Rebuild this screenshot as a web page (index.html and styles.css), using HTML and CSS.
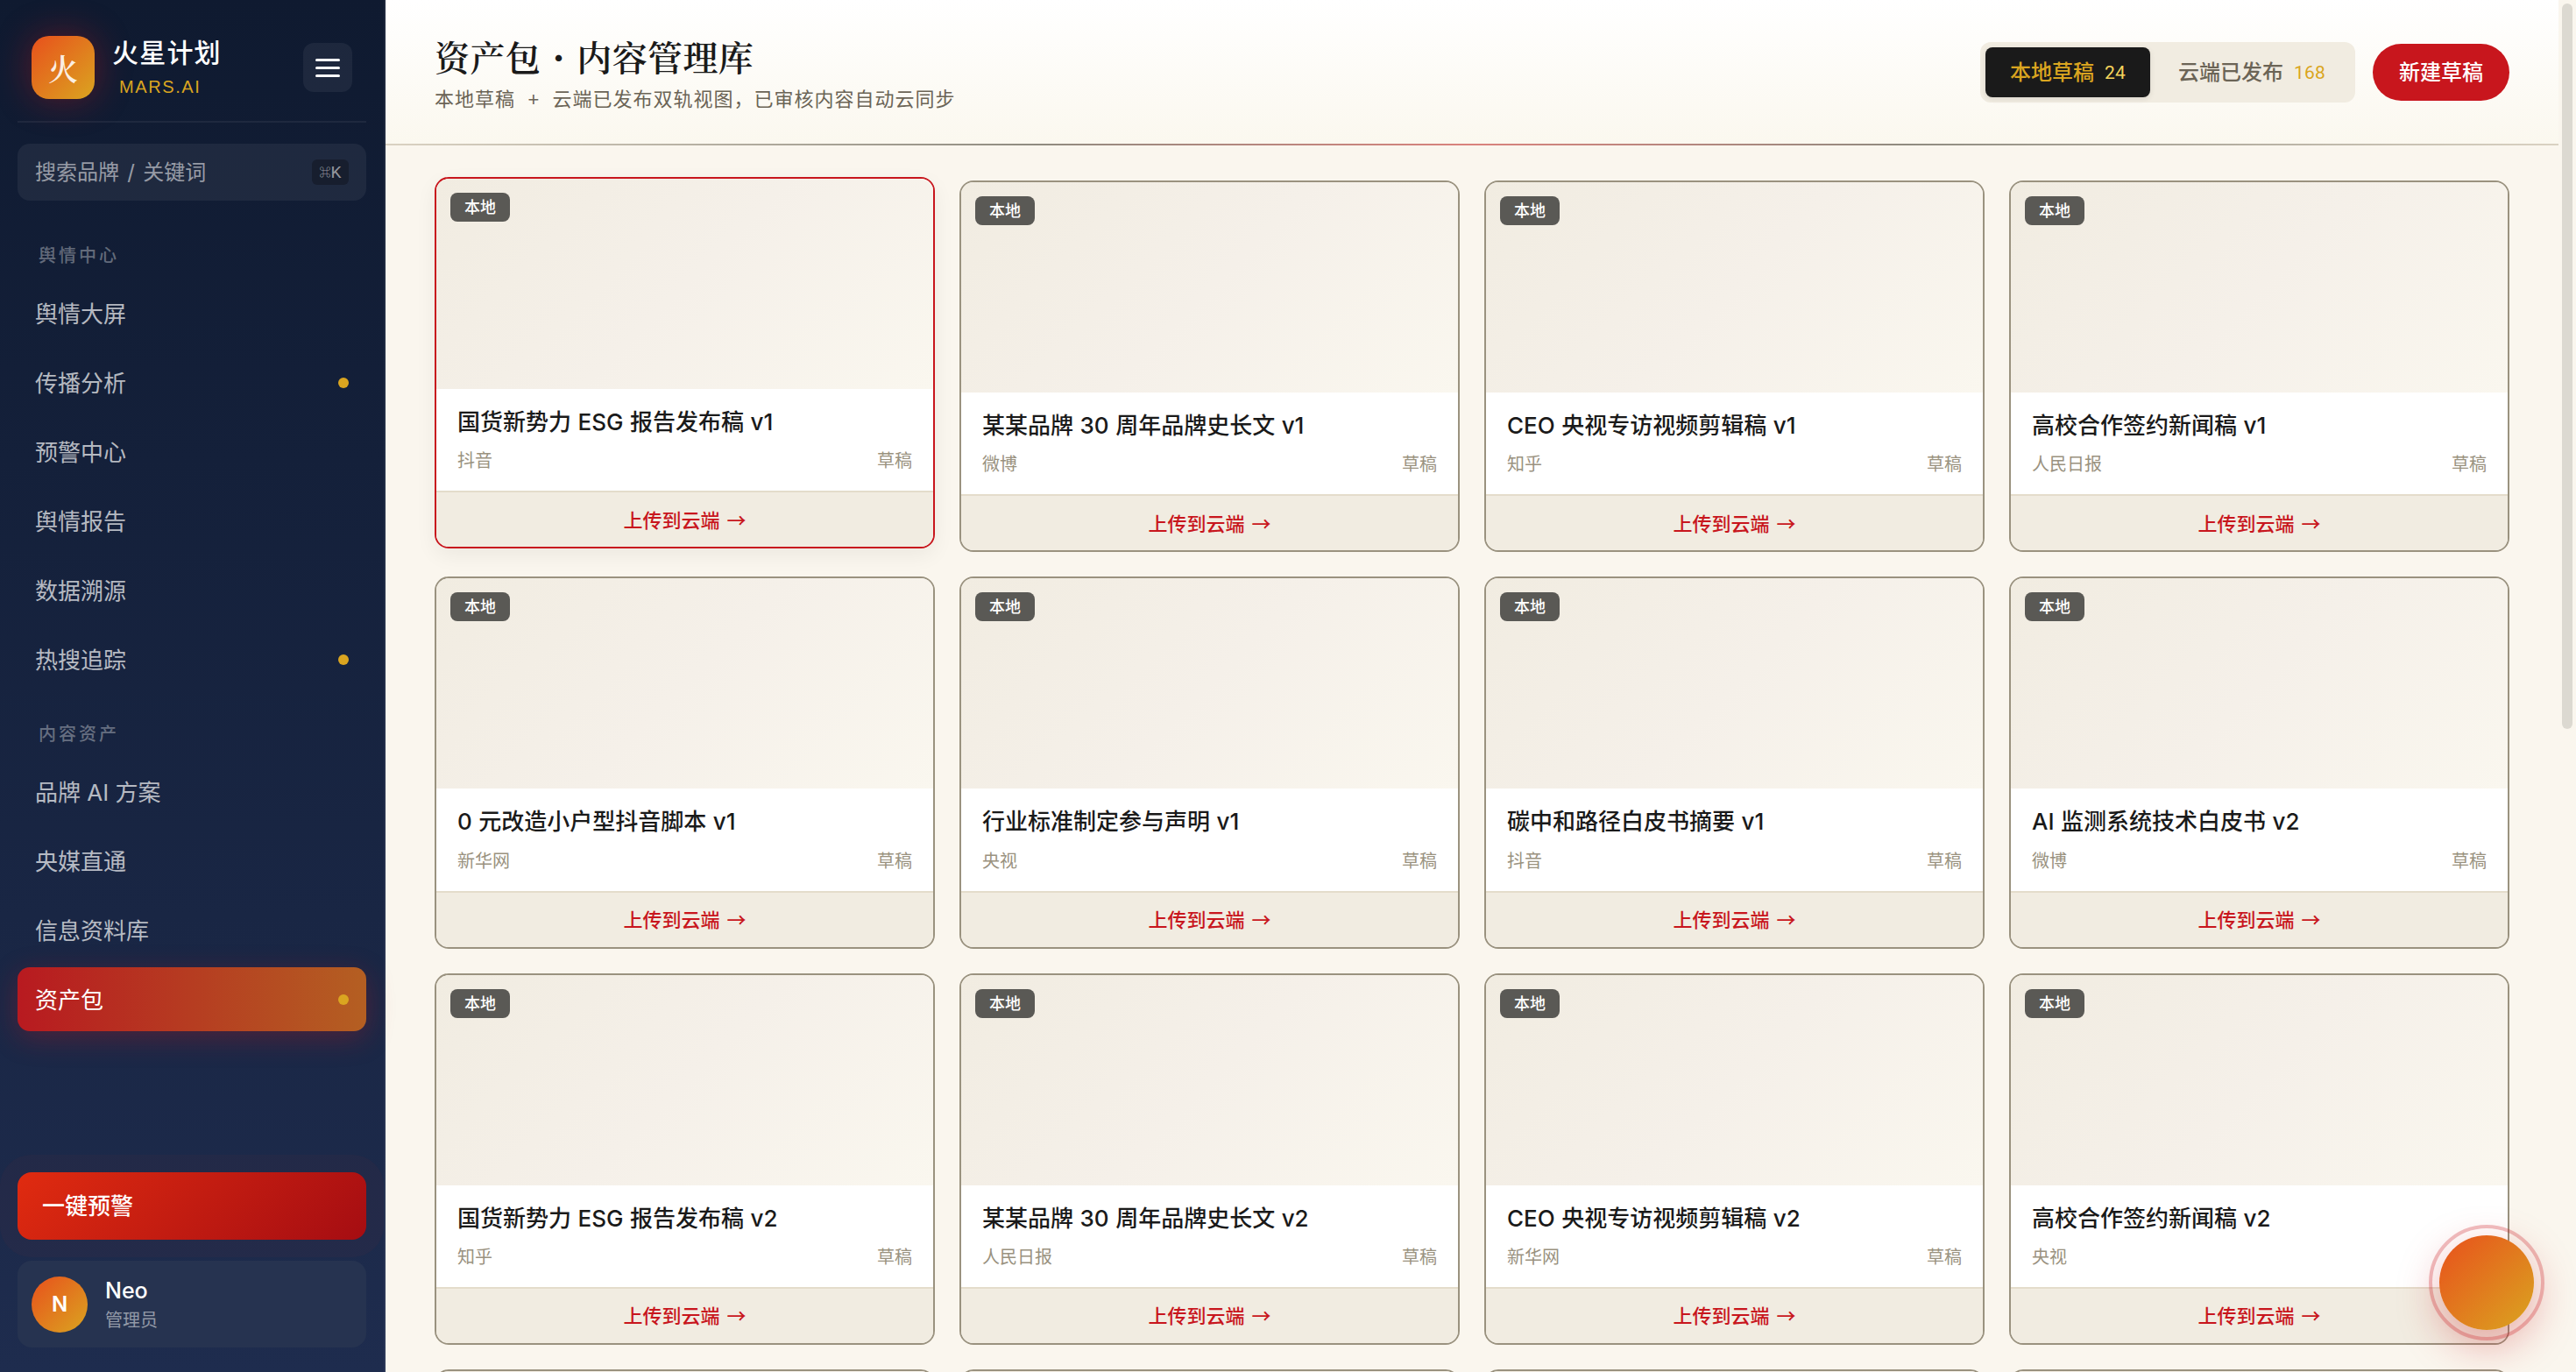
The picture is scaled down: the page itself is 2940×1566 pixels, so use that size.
FILE: index.html
```html
<!DOCTYPE html>
<html lang="zh-CN">
  <head>
    <meta charset="utf-8">
    <title>资产包</title>
    <link rel="stylesheet" href="styles.css">
  </head>
  <body>
    <aside class="sidebar">
      <div class="brand">
        <div class="brand-logo">火</div>
        <div class="brand-text">
          <div class="brand-name">火星计划</div>
          <div class="brand-sub">MARS.AI</div>
        </div>
        <button class="menu-btn" type="button"><span></span><span></span><span></span></button>
      </div>

      <div class="search">
        <span>搜索品牌 / 关键词</span>
        <kbd><small>⌘</small>K</kbd>
      </div>

      <div class="nav-label">舆情中心</div>
      <nav class="nav">
        <a class="nav-item">舆情大屏</a>
        <a class="nav-item">传播分析<i class="dot"></i></a>
        <a class="nav-item">预警中心</a>
        <a class="nav-item">舆情报告</a>
        <a class="nav-item">数据溯源</a>
        <a class="nav-item">热搜追踪<i class="dot"></i></a>
      </nav>
      <div class="nav-label second">内容资产</div>
      <nav class="nav">
        <a class="nav-item">品牌 AI 方案</a>
        <a class="nav-item">央媒直通</a>
        <a class="nav-item">信息资料库</a>
        <a class="nav-item active">资产包<i class="dot"></i></a>
      </nav>

      <button class="alert-btn" type="button">一键预警</button>
      <div class="user">
        <div class="avatar">N</div>
        <div>
          <div class="user-name">Neo</div>
          <div class="user-role">管理员</div>
        </div>
      </div>
    </aside>

    <main class="main">
      <header class="header">
        <div class="header-text">
          <h1 class="title">资产包 <b>·</b> 内容管理库</h1>
          <p class="subtitle">本地草稿 + 云端已发布双轨视图，已审核内容自动云同步</p>
        </div>
        <div class="actions">
          <div class="tabs">
            <button class="tab active" type="button">本地草稿<span class="num">24</span></button>
            <button class="tab" type="button">云端已发布<span class="num">168</span></button>
          </div>
          <button class="new-btn" type="button">新建草稿</button>
        </div>
      </header>

      <section class="grid">
        <article class="card hover">
          <div class="thumb"><span class="badge">本地</span></div>
          <div class="card-body">
            <h3>国货新势力 ESG 报告发布稿 v1</h3>
            <div class="meta"><span>抖音</span><span>草稿</span></div>
          </div>
          <button class="upload" type="button">上传到云端 →</button>
        </article>
        <article class="card">
          <div class="thumb"><span class="badge">本地</span></div>
          <div class="card-body">
            <h3>某某品牌 30 周年品牌史长文 v1</h3>
            <div class="meta"><span>微博</span><span>草稿</span></div>
          </div>
          <button class="upload" type="button">上传到云端 →</button>
        </article>
        <article class="card">
          <div class="thumb"><span class="badge">本地</span></div>
          <div class="card-body">
            <h3>CEO 央视专访视频剪辑稿 v1</h3>
            <div class="meta"><span>知乎</span><span>草稿</span></div>
          </div>
          <button class="upload" type="button">上传到云端 →</button>
        </article>
        <article class="card">
          <div class="thumb"><span class="badge">本地</span></div>
          <div class="card-body">
            <h3>高校合作签约新闻稿 v1</h3>
            <div class="meta"><span>人民日报</span><span>草稿</span></div>
          </div>
          <button class="upload" type="button">上传到云端 →</button>
        </article>

        <article class="card">
          <div class="thumb"><span class="badge">本地</span></div>
          <div class="card-body">
            <h3>0 元改造小户型抖音脚本 v1</h3>
            <div class="meta"><span>新华网</span><span>草稿</span></div>
          </div>
          <button class="upload" type="button">上传到云端 →</button>
        </article>
        <article class="card">
          <div class="thumb"><span class="badge">本地</span></div>
          <div class="card-body">
            <h3>行业标准制定参与声明 v1</h3>
            <div class="meta"><span>央视</span><span>草稿</span></div>
          </div>
          <button class="upload" type="button">上传到云端 →</button>
        </article>
        <article class="card">
          <div class="thumb"><span class="badge">本地</span></div>
          <div class="card-body">
            <h3>碳中和路径白皮书摘要 v1</h3>
            <div class="meta"><span>抖音</span><span>草稿</span></div>
          </div>
          <button class="upload" type="button">上传到云端 →</button>
        </article>
        <article class="card">
          <div class="thumb"><span class="badge">本地</span></div>
          <div class="card-body">
            <h3>AI 监测系统技术白皮书 v2</h3>
            <div class="meta"><span>微博</span><span>草稿</span></div>
          </div>
          <button class="upload" type="button">上传到云端 →</button>
        </article>

        <article class="card">
          <div class="thumb"><span class="badge">本地</span></div>
          <div class="card-body">
            <h3>国货新势力 ESG 报告发布稿 v2</h3>
            <div class="meta"><span>知乎</span><span>草稿</span></div>
          </div>
          <button class="upload" type="button">上传到云端 →</button>
        </article>
        <article class="card">
          <div class="thumb"><span class="badge">本地</span></div>
          <div class="card-body">
            <h3>某某品牌 30 周年品牌史长文 v2</h3>
            <div class="meta"><span>人民日报</span><span>草稿</span></div>
          </div>
          <button class="upload" type="button">上传到云端 →</button>
        </article>
        <article class="card">
          <div class="thumb"><span class="badge">本地</span></div>
          <div class="card-body">
            <h3>CEO 央视专访视频剪辑稿 v2</h3>
            <div class="meta"><span>新华网</span><span>草稿</span></div>
          </div>
          <button class="upload" type="button">上传到云端 →</button>
        </article>
        <article class="card">
          <div class="thumb"><span class="badge">本地</span></div>
          <div class="card-body">
            <h3>高校合作签约新闻稿 v2</h3>
            <div class="meta"><span>央视</span><span>草稿</span></div>
          </div>
          <button class="upload" type="button">上传到云端 →</button>
        </article>

        <article class="card"><div class="thumb"></div></article>
        <article class="card"><div class="thumb"></div></article>
        <article class="card"><div class="thumb"></div></article>
        <article class="card"><div class="thumb"></div></article>
      </section>
    </main>

    <div class="scrollbar"><div class="scroll-thumb"></div></div>
    <button class="fab" type="button"></button>
  </body>
</html>
```

FILE: styles.css
```css
* { box-sizing: border-box; }

body {
  margin: 0;
  height: 1566px;
  display: flex;
  overflow: hidden;
  background: #faf6ee;
  color: #1a1a1a;
  font-family: Inter, "Noto Sans CJK SC", sans-serif;
  font-size: 26px;
  line-height: 1.4;
}

button {
  border: none;
  padding: 0;
  margin: 0;
  font-family: inherit;
  line-height: inherit;
}

/* sidebar */
.sidebar {
  width: 440px;
  height: 100%;
  flex-shrink: 0;
  display: flex;
  flex-direction: column;
  padding: 28px 20px;
  border-right: 2px solid rgba(255, 255, 255, 0.06);
  background: linear-gradient(180deg, #0f1a30 0%, #1e2c4e 100%);
  color: #fff;
}

.brand {
  display: flex;
  align-items: center;
  height: 112px;
  padding: 0 16px 12px;
  margin-bottom: 24px;
  border-bottom: 2px solid rgba(255, 255, 255, 0.06);
}
.brand-logo {
  width: 72px;
  height: 72px;
  padding-top: 2px;
  border-radius: 20px;
  background: linear-gradient(135deg, #e8501c, #daa520);
  box-shadow: 0 0 40px rgba(200, 22, 29, 0.4);
  display: flex;
  align-items: center;
  justify-content: center;
  font-family: "Noto Serif CJK SC", "Noto Serif SC", "Noto Sans CJK SC", serif;
  font-size: 34px;
  font-weight: 600;
  color: rgba(255, 255, 255, 0.88);
}
.brand-text { margin-left: 20px; }
.brand-name { font-size: 30px; font-weight: 500; letter-spacing: 1.2px; line-height: 40px; }
.brand-sub { font-family: "Liberation Sans", sans-serif; font-size: 20px; letter-spacing: 1.6px; line-height: 30px; margin: 4px 0 0 8px; color: #daa520; }
.menu-btn {
  width: 56px;
  height: 56px;
  margin-left: auto;
  border-radius: 12px;
  background: rgba(255, 255, 255, 0.06);
  display: flex;
  flex-direction: column;
  align-items: center;
  justify-content: center;
  gap: 6px;
}
.menu-btn span { width: 28px; height: 3px; border-radius: 2px; background: #fff; }

.search {
  height: 65px;
  flex-shrink: 0;
  display: flex;
  align-items: center;
  justify-content: space-between;
  padding: 0 20px;
  border-radius: 14px;
  background: rgba(255, 255, 255, 0.06);
  color: rgba(255, 255, 255, 0.55);
  font-size: 24px;
  word-spacing: 2.5px;
}
.search kbd {
  width: 42px;
  height: 29px;
  border-radius: 6px;
  background: #171e2e;
  display: flex;
  align-items: center;
  justify-content: center;
  font-family: Roboto, "Noto Sans CJK SC", sans-serif;
  font-size: 19px;
  line-height: 29px;
}
.search small { font-size: 13px; }

.nav-label {
  height: 28px;
  margin: 48px 0 16px;
  padding-left: 24px;
  font-size: 20px;
  font-weight: 500;
  line-height: 30px;
  letter-spacing: 3px;
  color: rgba(255, 255, 255, 0.35);
}
.nav-label.second { margin: 34px 0 16px; }

.nav { display: flex; flex-direction: column; gap: 6px; }
.nav-item {
  height: 73px;
  display: flex;
  align-items: center;
  justify-content: space-between;
  padding: 3px 20px 0;
  border-radius: 14px;
  color: rgba(255, 255, 255, 0.7);
}
.nav-item.active {
  color: #fff;
  background: linear-gradient(90deg, #b81a20, #b45f22);
  box-shadow: 0 8px 32px rgba(200, 22, 29, 0.3);
}
.dot { width: 12px; height: 12px; margin-top: -3px; border-radius: 50%; background: #daa520; }

.alert-btn {
  height: 77px;
  margin-top: auto;
  padding: 2px 0 0 28px;
  border-radius: 16px;
  background: linear-gradient(135deg, #e02b10, #a50d12);
  box-shadow: 0 0 0 20px rgba(224, 43, 16, 0.04);
  color: #fff;
  font-size: 26px;
  font-weight: 500;
  text-align: left;
}
.user {
  height: 99px;
  flex-shrink: 0;
  margin-top: 24px;
  padding: 0 16px;
  display: flex;
  align-items: center;
  gap: 20px;
  border-radius: 16px;
  background: #263350;
}
.avatar {
  width: 64px;
  height: 64px;
  border-radius: 50%;
  background: linear-gradient(135deg, #e8501c, #daa520);
  font-size: 24px;
  font-weight: 600;
  line-height: 64px;
  text-align: center;
}
.user-name { padding-top: 2px; font-size: 25px; font-weight: 500; line-height: 35px; }
.user-role { font-size: 20px; line-height: 33px; color: rgba(255, 255, 255, 0.5); }

/* main */
.main { width: 2480px; height: 100%; overflow: hidden; }

.header {
  height: 166px;
  display: flex;
  align-items: center;
  justify-content: space-between;
  padding: 0 56px;
  border-bottom: 2px solid;
  border-image: linear-gradient(90deg, #dad2c2, #8f8b80 30%, #da827c 50%, #8f8b80 70%, #dad2c2) 1;
  background: linear-gradient(180deg, #fff, #fbf8ef);
}
.header-text { padding-top: 4px; }
.title {
  margin: 0;
  font-family: "Noto Serif CJK SC", "Noto Serif SC", "Noto Sans CJK SC", serif;
  font-size: 40px;
  font-weight: 600;
  line-height: 56px;
  letter-spacing: 0.4px;
  word-spacing: 3px;
}
.title b { font-weight: 900; }
.subtitle {
  margin: 8px 0 0;
  font-family: "Liberation Mono", "Noto Sans CJK SC", monospace;
  font-size: 22px;
  line-height: 32px;
  letter-spacing: 1px;
  color: #6b6456;
}
.actions { display: flex; align-items: center; gap: 20px; }
.tabs { display: flex; gap: 4px; padding: 6px; border-radius: 12px; background: #f1ece1; }
.tab {
  height: 57px;
  display: flex;
  align-items: center;
  gap: 12px;
  padding: 1px 28px 0;
  border-radius: 8px;
  background: none;
  color: #6b6456;
  font-size: 24px;
  font-weight: 500;
}
.tab.active { background: #1a1a1a; color: #daa520; box-shadow: 0 2px 6px rgba(0, 0, 0, 0.1); }
.num { padding-top: 2px; font-family: Roboto, sans-serif; font-size: 21px; letter-spacing: 0.2px; font-weight: 400; color: #daa520; }
.tab.active .num { color: #f5d35b; }
.new-btn {
  height: 65px;
  padding: 1px 30px 0;
  border-radius: 33px;
  background: #c8161d;
  color: #fff;
  font-size: 24px;
  font-weight: 500;
}

.grid {
  display: grid;
  grid-template-columns: repeat(4, 1fr);
  gap: 28px;
  padding: 40px 56px;
}
.card {
  border: 2px solid #9a927f;
  border-radius: 16px;
  background: #fff;
  overflow: hidden;
}
.card.hover {
  border-color: #c8161d;
  box-shadow: 0 8px 24px rgba(0, 0, 0, 0.06);
  transform: translateY(-4px);
}
.thumb {
  height: 240px;
  padding: 16px;
  background: linear-gradient(135deg, #f1ece1, #f5f0e9 50%, #faf7ef);
}
.badge {
  display: block;
  width: 68px;
  height: 33px;
  border-radius: 8px;
  background: #5a5955;
  color: #fff;
  font-size: 18px;
  font-weight: 500;
  line-height: 33px;
  text-align: center;
}
.card-body { padding: 20px 24px; }
.card-body h3 { margin: 0 0 12px; font-size: 26px; font-weight: 500; line-height: 36.4px; word-spacing: 0.6px; }
.meta {
  display: flex;
  justify-content: space-between;
  font-size: 20px;
  line-height: 28px;
  color: #9a927f;
}
.upload {
  display: block;
  width: 100%;
  height: 64px;
  padding-bottom: 3px;
  border-top: 2px solid #e4dccb;
  background: #f1ece1;
  color: #c8161d;
  font-family: "Noto Sans CJK SC", sans-serif;
  font-size: 22px;
  font-weight: 500;
  word-spacing: 3px;
}

.scrollbar { width: 20px; height: 100%; padding: 4px; }
.scroll-thumb { width: 12px; height: 828px; border-radius: 6px; background: #dcd9d1; }

/* floating button */
.fab {
  position: fixed;
  right: 48px;
  bottom: 48px;
  width: 108px;
  height: 108px;
  border-radius: 50%;
  background: linear-gradient(135deg, #e8501c, #daa520);
  box-shadow: 0 16px 48px rgba(200, 22, 29, 0.35);
}
.fab::after {
  content: "";
  position: absolute;
  inset: -12px;
  border: 4px solid rgba(200, 22, 29, 0.28);
  border-radius: 50%;
}
```
